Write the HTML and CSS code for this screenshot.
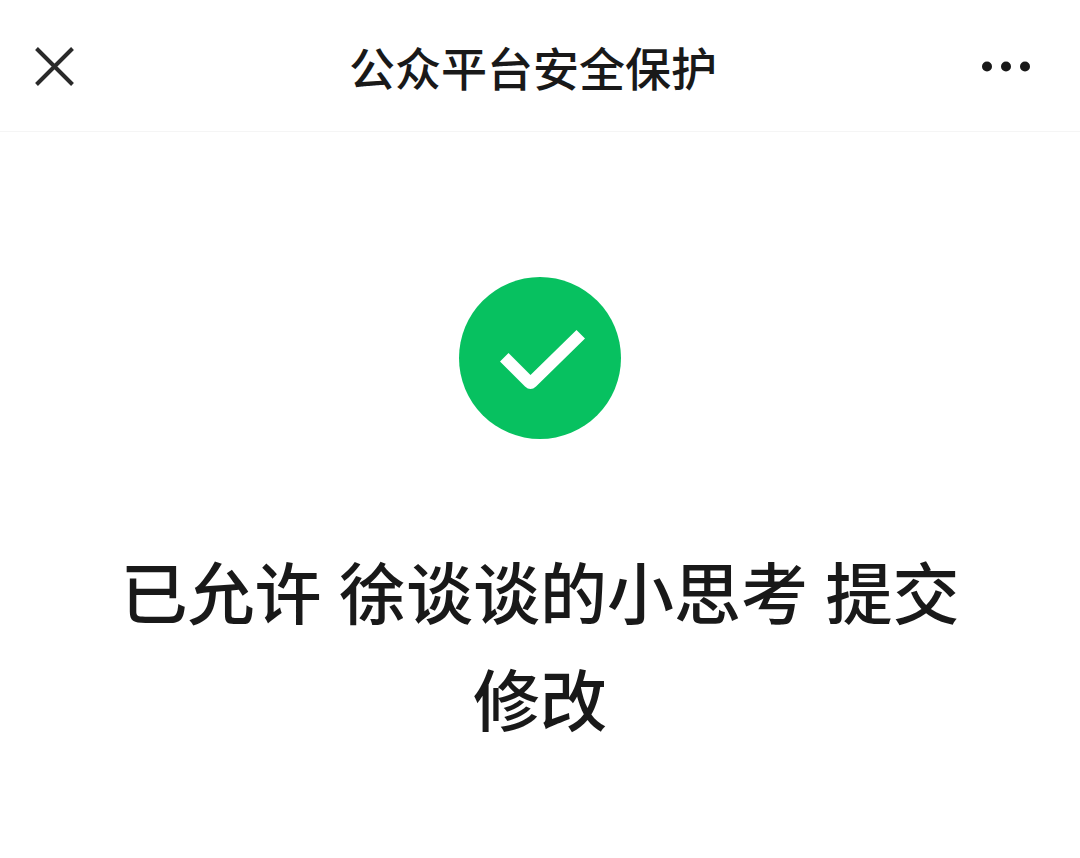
FILE: index.html
```html
<!DOCTYPE html>
<html lang="zh-CN">

<head>
    <meta charset="UTF-8">
    <meta name="viewport" content="width=device-width, initial-scale=1.0">
    <title>公众平台安全保护</title>
    <link rel="stylesheet" href="styles.css">
</head>

<body>
    <header class="navbar">
        <button type="button" class="nav_btn" aria-label="关闭">
            <svg class="icon_close" viewBox="0 0 40 40">
                <path d="M2.5 2.5 L38.5 38.5 M38.5 2.5 L2.5 38.5" />
            </svg>
        </button>
        <h1 class="nav_title">公众平台安全保护</h1>
        <button type="button" class="nav_btn nav_more" aria-label="更多">
            <svg class="icon_more" viewBox="0 0 50 12">
                <circle cx="6" cy="6.5" r="5" />
                <circle cx="25" cy="6.5" r="5" />
                <circle cx="44" cy="6.5" r="5" />
            </svg>
        </button>
    </header>

    <main class="msg">
        <svg class="icon_success" viewBox="0 0 162 162">
            <circle cx="81" cy="81" r="81" />
            <path d="M41 84.500 L49.500 76 L71.500 98 L117.500 53 L126 61.500 L77 109.500 Q71.500 114.500 66 109.500 Z" />
        </svg>
        <h2 class="msg_title">已允许 徐谈谈的小思考 提交修改</h2>
    </main>
</body>

</html>
```
FILE: styles.css
```css
* {
    padding: 0;
    margin: 0;
    box-sizing: border-box;
}

body {
    background-color: #fff;
    color: #191919;
    font-family: "Noto Sans", "Noto Sans CJK SC", sans-serif;
}

.navbar {
    display: grid;
    grid-template-columns: 1fr auto 1fr;
    align-items: center;
    height: 132px;
    padding: 0 48px 0 34px;
    border-bottom: 1px solid #f5f5f5;
}

.nav_btn {
    display: flex;
    justify-self: start;
    border: 0;
    background: none;
    cursor: pointer;
}

.nav_more {
    justify-self: end;
}

.nav_title {
    padding-top: 4px;
    font-size: 46px;
    font-weight: 500;
    line-height: 64px;
}

.icon_close {
    width: 40px;
    height: 40px;
    fill: none;
    stroke: #2a2a2a;
    stroke-width: 4;
}

.icon_more {
    width: 52px;
    height: 12px;
    fill: #191919;
}

.msg {
    display: flex;
    flex-direction: column;
    align-items: center;
    padding: 145px 96px 48px;
    text-align: center;
}

.icon_success {
    width: 162px;
    height: 162px;
    margin-bottom: 101px;
    fill: #07c160;
}

.icon_success path {
    fill: #fff;
}

.msg_title {
    font-size: 67px;
    font-weight: 500;
    line-height: 107px;
}
```
